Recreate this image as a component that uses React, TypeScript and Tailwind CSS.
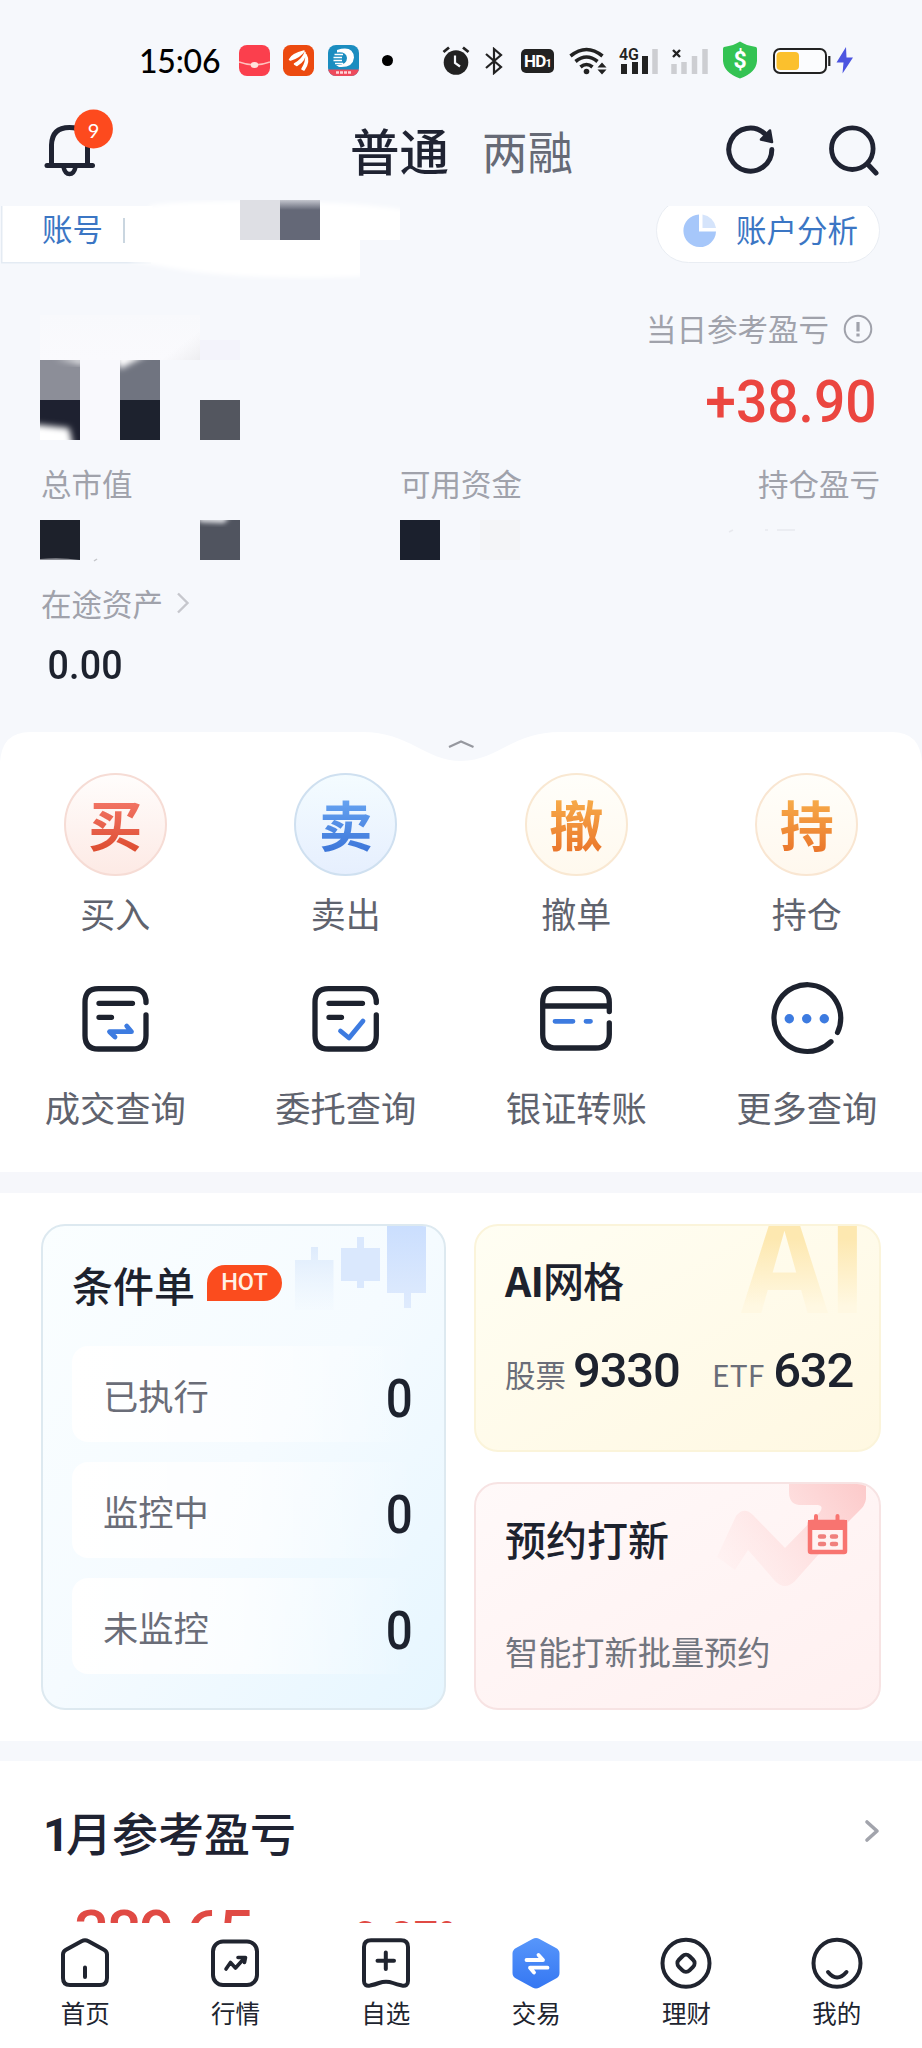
import React from "react";

const CJK = "font-['Noto_Sans_CJK_SC',sans-serif]";
const NUM = "font-[Roboto,'Noto_Sans_CJK_SC',sans-serif]";

function StatusBar() {
  return (
    <div className="flex h-[121px] w-full items-center pl-[139px]">
      <span className="w-[100px] font-[Lato,sans-serif] text-[32px] font-medium leading-[32px] tracking-[-0.2px] text-black">15:06</span>
      <svg width="31" height="31" viewBox="0 0 31 31">
        <rect width="31" height="31" rx="8" fill="#fb3f4d" />
        <path d="M0 17 Q15.500 23 31 17" fill="none" stroke="#ffc1bd" strokeWidth="1.500" />
        <ellipse cx="15.500" cy="20" rx="3.800" ry="3" fill="#ffe3dc" />
      </svg>
      <svg className="ml-[13px]" width="31" height="31" viewBox="0 0 31 31">
        <rect width="31" height="31" rx="7.500" fill="#ec4a10" />
        <path d="M6.500 14.500 Q9 9 21 6 Q17 12 7.500 15Z M11.500 19 Q20 14 22 7.500 Q23 14.500 14 20.500Z M19 24 Q23.500 17 23 9.500 Q27 16.500 21 25Z" fill="#fff" stroke="#fff" strokeWidth="1.500" strokeLinejoin="round" />
      </svg>
      <svg className="ml-[14px]" width="31" height="31" viewBox="0 0 31 31">
        <defs><clipPath id="appc"><rect width="31" height="31" rx="8" /></clipPath></defs>
        <g clipPath="url(#appc)">
          <rect width="31" height="31" fill="#1b8dc0" />
          <rect y="24.500" width="31" height="7" fill="#ee4a5c" />
          <path d="M9 5 Q25 0 26 12.500 Q25 23 11 22 L8 20 Q19 20.500 19 13 Q18.500 6.500 9 7.500Z" fill="#fff" />
          <path d="M6.500 9.500H15M5.500 12.500H14M5.500 15.500H14M7 18.500H15" stroke="#fff" strokeWidth="1.300" />
          <path d="M8 27.500H23" stroke="#ffd5d8" strokeWidth="2.500" strokeDasharray="3 1" />
        </g>
      </svg>
      <svg className="ml-[23px]" width="11" height="11"><circle cx="5.500" cy="5.500" r="5.500" fill="#000" /></svg>
      <svg className="ml-[49px]" width="28" height="30" viewBox="0 0 28 30">
        <circle cx="14" cy="16.500" r="12.300" fill="#222" />
        <path d="M1.500 6 L7 1.500 M26.500 6 L21 1.500" stroke="#222" strokeWidth="2.800" />
        <path d="M13 9.500V17L18 20.500" stroke="#f6f8fc" strokeWidth="2.200" fill="none" />
      </svg>
      <svg className="ml-[15px]" width="18" height="28" viewBox="0 0 18 28">
        <path d="M1 7 L16 20 L9 26 V2 L16 8 L1 21" fill="none" stroke="#222" strokeWidth="2.200" />
      </svg>
      <div className={`ml-[18px] mt-px flex h-[24px] w-[33px] items-center justify-center rounded-[5px] bg-[#222] ${NUM} text-[17px] font-bold leading-none tracking-[-0.8px] text-white`}>
        HD<span className="mt-[4px] text-[11px]">1</span>
      </div>
      <svg className="ml-[15px]" width="39" height="28" viewBox="0 0 39 28">
        <g fill="none" stroke="#222" strokeWidth="3.600">
          <path d="M1.500 9 Q17.500 -4 33.500 9" />
          <path d="M6.500 14.500 Q17.500 5.500 28.500 14.500" />
          <path d="M11.500 20 Q17.500 15 23.500 20" />
        </g>
        <circle cx="17.500" cy="24.500" r="2.800" fill="#222" />
        <path d="M28.500 20.500 L33 15.500 L37.500 20.500Z M28.500 22.500 L33 27.500 L37.500 22.500Z" fill="#222" />
      </svg>
      <svg className="ml-[11px] overflow-visible" width="40" height="30" viewBox="0 -1 40 30">
        <text x="0" y="12.500" fontFamily="Roboto" fontWeight="600" fontSize="17" textLength="20" lengthAdjust="spacingAndGlyphs" fill="#222">4G</text>
        <path d="M5 17V27M16 15V27M26 9V27" stroke="#222" strokeWidth="6" />
        <path d="M36 2V27" stroke="#cdced2" strokeWidth="5.500" />
      </svg>
      <svg className="ml-[12px]" width="38" height="28" viewBox="0 0 38 28">
        <path d="M3 17V27M13 15V27M23.500 9V27M34 2V27" stroke="#cdced2" strokeWidth="5.500" />
        <path d="M2 3L9 10M9 3L2 10" stroke="#222" strokeWidth="2.400" />
      </svg>
      <svg className="ml-[14px] -mt-px" width="34" height="38" viewBox="0 0 34 38">
        <path d="M17 0.500 Q23 4.500 33 6 Q34 6.500 34 8 V20 Q33 32 17 37.500 Q1 32 0 20 V8 Q0 6.500 1 6 Q11 4.500 17 0.500Z" fill="#34c353" />
        <text x="17" y="26.500" textAnchor="middle" fontFamily="Roboto" fontWeight="700" fontSize="23" fill="#fff">$</text>
      </svg>
      <svg className="ml-[16px]" width="58" height="26" viewBox="0 0 58 26">
        <rect x="1" y="1" width="52" height="24" rx="6" fill="#fff" fillOpacity=".5" stroke="#222" strokeWidth="2" />
        <rect x="3.500" y="4" width="22.500" height="18" rx="4" fill="#fbc02d" />
        <path d="M56.300 8V18" stroke="#222" strokeWidth="2.200" />
      </svg>
      <svg className="ml-[5px]" width="18" height="27" viewBox="0 0 18 27"><path d="M10 0 L0.500 15.500 H7.500 L6.500 26.500 L17 10.500 H10.500Z" fill="#4c55e0" /></svg>
    </div>
  );
}

function Header() {
  return (
    <header className="flex h-[79px] w-full items-start">
      <div className="w-[350px] pl-[43px]">
        <svg className="-mt-[14px]" width="72" height="70" viewBox="0 0 72 70">
          <path d="M8.500 56V38 Q9 20.500 26.500 20.500 Q44 20.500 44.500 38V56" fill="none" stroke="#1f2332" strokeWidth="5" />
          <path d="M4 58.500H49.500" stroke="#1f2332" strokeWidth="5" strokeLinecap="round" />
          <path d="M20.500 60 Q22 67 26.500 67 Q31 67 32.500 60" fill="none" stroke="#1f2332" strokeWidth="4.500" />
          <circle cx="50.500" cy="22" r="19.400" fill="#fd4a1e" />
          <text x="50.500" y="30.500" textAnchor="middle" fontFamily="Lato" fontSize="20" fill="#fff">9</text>
        </svg>
      </div>
      <div className={`-mt-px flex ${CJK} leading-[60px]`}>
        <span className="w-[132px] text-[49.5px] font-medium text-[#1f2332]">普通</span>
        <span className="w-[150px] text-[45.5px] text-[#666a76]">两融</span>
      </div>
      <svg className="ml-[93px] mt-[3px]" width="52" height="52" viewBox="0 0 52 52">
        <path d="M46.800 25.500 A21.500 21.500 0 1 1 39.500 9.500" fill="none" stroke="#1f2332" strokeWidth="5" strokeLinecap="round" />
        <path d="M45 6.500 L47 18 L36 15.500Z" fill="#1f2332" stroke="#1f2332" strokeWidth="2.500" strokeLinejoin="round" />
      </svg>
      <svg className="ml-[50px] mt-[3px]" width="52" height="54" viewBox="0 0 52 54">
        <circle cx="25.300" cy="24.700" r="20.800" fill="none" stroke="#1f2332" strokeWidth="4.800" />
        <path d="M40.500 40 L49 49" stroke="#1f2332" strokeWidth="5" strokeLinecap="round" />
      </svg>
    </header>
  );
}

function AccountRow() {
  return (
    <div className="relative flex h-[90px] w-full justify-between pr-[42px]">
      <svg className="absolute left-0 top-0" width="420" height="90" viewBox="0 0 420 90">
        <defs>
          <filter id="soft"><feGaussianBlur stdDeviation="2.200" /></filter>
          <linearGradient id="fade" x1="0" y1="0" x2="0" y2="1">
            <stop offset="0" stopColor="#c4c6ce" /><stop offset=".25" stopColor="#646877" />
          </linearGradient>
          <clipPath id="blob"><path d="M100 0H400V40H360V80H100Z" /></clipPath>
        </defs>
        <rect x="1" y="6" width="150" height="57.500" fill="#e4ebf3" />
        <rect x="2.500" y="6" width="150" height="56" fill="#fff" />
        <g clipPath="url(#blob)">
          <path d="M150 6 Q160 2 240 1 Q360 1 410 11 V46 H370 V76 Q240 82 160 66 Q150 64 130 61Z" fill="#fff" filter="url(#soft)" />
        </g>
        <rect x="240" y="0" width="40" height="40" fill="#dedfe4" />
        <rect x="280" y="0" width="40" height="40" fill="url(#fade)" />
        <path d="M124 18V43" stroke="#b9c8d6" strokeWidth="1.500" />
      </svg>
      <span className={`relative ml-[42px] mt-[9px] ${CJK} text-[30.5px] leading-[38px] text-[#3b76c4]`}>账号</span>
      <div className="relative mt-[6px] h-[58px] overflow-hidden">
        <div className="-mt-[8px] flex h-[65px] w-[224px] items-center rounded-full border border-[#e9edf3] bg-white pl-[26px]">
          <svg width="35" height="35" viewBox="0 0 35 35">
            <path d="M16 1.500 A16.300 16.300 0 1 0 33 18.500 H16Z" fill="#a6c7fa" />
            <path d="M19.500 1.500 A16 16 0 0 1 33 15 H19.500Z" fill="#d5e4fb" />
          </svg>
          <span className={`-mt-[4px] ml-[18px] ${CJK} text-[30.5px] leading-[38px] text-[#3b76c4]`}>账户分析</span>
        </div>
      </div>
    </div>
  );
}

const LABEL = "font-['Noto_Sans_CJK_SC',sans-serif] text-[30.5px] leading-[40px] text-[#a0a2ab]";

function Assets() {
  return (
    <section className="h-[442px] w-full pl-[40px] pr-[42px]">
      <div className="flex h-[170px] justify-between">
        <svg className="mt-[10px]" width="200" height="140" viewBox="0 300 200 140">
          <defs>
            <filter id="soft2" x="-50%" y="-50%" width="200%" height="200%"><feGaussianBlur stdDeviation="3" /></filter>
            <linearGradient id="haze" x1="0" y1="0" x2="0" y2="1"><stop offset="0" stopColor="#f8f9fc" /><stop offset="1" stopColor="#fafafd" /></linearGradient>
            <linearGradient id="haze2" x1="0" y1="0" x2="1" y2="1"><stop offset=".5" stopColor="#f0f0f3" stopOpacity="0" /><stop offset="1" stopColor="#ededf0" /></linearGradient>
            <clipPath id="cl1"><rect y="360" width="40" height="80" /></clipPath>
            <clipPath id="cl2"><rect x="80" y="360" width="40" height="40" /></clipPath>
          </defs>
          <rect y="315" width="160" height="45" fill="url(#haze)" />
          <rect x="120" y="330" width="40" height="30" fill="url(#haze2)" />
          <rect x="160" y="340" width="40" height="20" fill="#f3f3fb" />
          <rect x="40" y="360" width="40" height="80" fill="#f9f9fd" />
          <rect y="360" width="40" height="40" fill="#8c8e98" />
          <rect y="400" width="40" height="40" fill="#1e2130" />
          <g clipPath="url(#cl1)">
            <path d="M-10 424 L29 428 L34 450 H-10Z" fill="#fff" filter="url(#soft2)" />
            <path d="M15 358H44V364Z" fill="#fff" filter="url(#soft2)" />
          </g>
          <rect x="80" y="360" width="40" height="40" fill="#707480" />
          <g clipPath="url(#cl2)"><path d="M74 354H108L80 369Z" fill="#fff" filter="url(#soft2)" /></g>
          <rect x="80" y="400" width="40" height="40" fill="#1d222e" />
          <rect x="160" y="400" width="40" height="40" fill="#53565f" />
        </svg>
        <div className="flex flex-col items-end pt-[18px]">
          <div className="flex items-center pr-[7px]">
            <span className={LABEL}>当日参考盈亏</span>
            <svg className="ml-[14px] mt-[2px]" width="30" height="30" viewBox="0 0 30 30">
              <circle cx="15" cy="15" r="13.300" fill="none" stroke="#a0a2ab" strokeWidth="2" />
              <path d="M15 8V17.500M15 19.500V22.500" stroke="#a0a2ab" strokeWidth="3.200" />
            </svg>
          </div>
          <div className={`mt-[22px] origin-right scale-x-[0.92] pr-[4px] ${NUM} text-[60px] font-medium leading-[64px] tracking-[0px] text-[#eb4640]`}>+38.90</div>
        </div>
      </div>
      <div className="flex h-[60px] pt-[3px]">
        <span className={`${LABEL} w-[360px] pl-px`}>总市值</span>
        <span className={`${LABEL} flex-1`}>可用资金</span>
        <span className={LABEL}>持仓盈亏</span>
      </div>
      <svg width="800" height="42" viewBox="0 0 800 42">
        <defs>
          <filter id="soft3" x="-50%" y="-50%" width="200%" height="200%"><feGaussianBlur stdDeviation="2.500" /></filter>
          <clipPath id="cl3"><rect x="160" width="40" height="40" /></clipPath>
        </defs>
        <rect width="40" height="40" fill="#1d212b" />
        <path d="M0 39 Q20 37 40 40H0Z" fill="#8b8d94" />
        <rect x="160" width="40" height="40" fill="#50545f" />
        <g clipPath="url(#cl3)"><path d="M156 -4H190L184 3L160 2Z" fill="#e8e9ed" filter="url(#soft3)" /></g>
        <path d="M54 41L57 39" stroke="#c5c6ca" strokeWidth="1.500" />
        <rect x="360" width="40" height="40" fill="#1b202d" />
        <rect x="440" width="40" height="40" fill="#f4f5f8" />
        <path d="M689 12L693 10M725 10H728M737 10H755" stroke="#e8e9ee" strokeWidth="1.500" />
      </svg>
      <div className="flex h-[61px] items-center pt-[20px]">
        <span className={`${LABEL} pl-px`}>在途资产</span>
        <svg className="ml-[13px] mt-px" width="14" height="22" viewBox="0 0 14 22"><path d="M2 1.500L11.500 11L2 20.500" fill="none" stroke="#c6c7cd" strokeWidth="2.400" /></svg>
      </div>
      <div className={`mt-[17px] origin-left scale-x-[0.94] pl-[8px] ${NUM} text-[40px] font-medium leading-[52px] tracking-[0.2px] text-[#1d222e]`}>0.00</div>
    </section>
  );
}

const primary = [
  { c: "买", label: "买入", ring: "border-[#f6dcd5] from-[#fffdfc] to-[#fdeae5]", text: "from-[#f5796b] to-[#dc4a2c]" },
  { c: "卖", label: "卖出", ring: "border-[#cfe0f0] from-[#f4fcff] to-[#e6effe]", text: "from-[#6ca8f3] to-[#3b74d8]" },
  { c: "撤", label: "撤单", ring: "border-[#f9e8d2] from-[#fffefa] to-[#fff9ee]", text: "from-[#f8b04c] to-[#e9742a]" },
  { c: "持", label: "持仓", ring: "border-[#f9e6d2] from-[#fffefa] to-[#fff8ee]", text: "from-[#f8b04c] to-[#e9742a]" },
];

const D = "#1d222e";
const B = "#3d7be0";

const queries = [
  {
    label: "成交查询",
    icon: (
      <g fill="none" strokeWidth="5.300" strokeLinecap="round" strokeLinejoin="round">
        <path d="M67 17V19.500Q67 5.700 53.500 5.700H19.500Q6 5.700 6 19.500V52.500Q6 66 19.500 66H53.500Q67 66 67 52.500V32M20 20.300H53.500M20 34.300H32.500" stroke={D} />
        <path d="M36 54L30.500 48.700H52.500L47.700 43" stroke={B} strokeWidth="4.800" />
      </g>
    ),
  },
  {
    label: "委托查询",
    icon: (
      <g fill="none" strokeWidth="5.300" strokeLinecap="round" strokeLinejoin="round">
        <path d="M66.300 17V19.500Q66.300 5.700 52.500 5.700H18.500Q5 5.700 5 19.500V52.500Q5 66 18.500 66H52.500Q66.300 66 66.300 52.500V32M19 20.300H52.500M19 34.300H31.500" stroke={D} />
        <path d="M30.500 48L39 55L53 38" stroke={B} strokeWidth="4.800" />
      </g>
    ),
  },
  {
    label: "银证转账",
    icon: (
      <g fill="none" strokeWidth="5.300" strokeLinecap="round" strokeLinejoin="round">
        <path d="M69.300 28.500V19.500Q69.300 5.700 55.500 5.700H16.500Q2.700 5.700 2.700 19.500V51.500Q2.700 65 16.500 65H55.500Q69.300 65 69.300 51.500V40M3 23H69" stroke={D} />
        <path d="M15 38.300H33M46 38.300H50.500" stroke={B} strokeWidth="4.800" />
      </g>
    ),
  },
  {
    label: "更多查询",
    icon: (
      <g>
        <path d="M66.500 49.500A33.400 33.400 0 1 0 60 58.700" fill="none" stroke={D} strokeWidth="5.200" strokeLinecap="round" />
        <g fill={B}><circle cx="18.300" cy="35.700" r="4.700" /><circle cx="35.700" cy="35.700" r="4.700" /><circle cx="53.300" cy="35.700" r="4.700" /></g>
      </g>
    ),
  },
];

function Actions() {
  return (
    <section className="relative h-[440px] w-full bg-[#f6f8fc]">
      <svg className="absolute inset-0" width="922" height="440" viewBox="0 0 922 440">
        <path d="M0 30Q2 0 30 0H362C410 0 425 29 461 29S512 0 560 0H892Q920 0 922 30V440H0Z" fill="#fff" />
        <path d="M449 15L461 9.500L473.500 15" fill="none" stroke="#96989f" strokeWidth="2.200" />
      </svg>
      <div className="relative grid h-[440px] grid-cols-4 content-start pt-[41px]">
        {primary.map((p) => (
          <div key={p.c} className="flex h-[202px] flex-col items-center">
            <div className={`flex h-[103px] w-[103px] items-center justify-center rounded-full border-2 bg-gradient-to-b ${p.ring}`}>
              <span className={`-mt-[2px] bg-gradient-to-b ${p.text} bg-clip-text ${CJK} text-[54px] font-bold leading-[60px] text-transparent`}>{p.c}</span>
            </div>
            <span className={`mt-[15px] ${CJK} text-[35px] leading-[44px] text-[#5f636e]`}>{p.label}</span>
          </div>
        ))}
        {queries.map((q) => (
          <div key={q.label} className="flex flex-col items-center pt-[8px]">
            <svg className="overflow-visible" width="72" height="72" viewBox="0 0 72 72">{q.icon}</svg>
            <span className={`mt-[30px] ${CJK} text-[35.3px] leading-[44px] text-[#5f636e]`}>{q.label}</span>
          </div>
        ))}
      </div>
    </section>
  );
}

function Cards() {
  return (
    <section className="flex h-[548px] w-full justify-between bg-white pl-[41px] pr-[41px] pt-[31px]">
      <div className="relative flex h-[486px] w-[405px] flex-col overflow-hidden rounded-[24px] border-2 border-[#dde9f0] bg-gradient-to-br from-[#fafeff] via-[#f5fbff] to-[#e6f6ff] px-[29px]">
        <svg className="absolute -top-[2px] right-0" width="160" height="96" viewBox="0 0 160 96">
          <defs>
            <linearGradient id="k1" x1="0" y1="0" x2="0" y2="1"><stop offset="0" stopColor="#deebfc" /><stop offset="1" stopColor="#e6f1fd" stopOpacity=".1" /></linearGradient>
            <linearGradient id="k3" x1="0" y1="0" x2="0" y2="1"><stop offset="0" stopColor="#cadefe" /><stop offset="1" stopColor="#dfebfd" /></linearGradient>
          </defs>
          <path d="M27 23H34V36H49.500V86H11V36H27Z" fill="url(#k1)" />
          <path d="M73 13H80V24H96V57H80V64H73V57H57V24H73Z" fill="#dae8fd" />
          <path d="M103 0H142V69H127V84H120V69H103Z" fill="url(#k3)" />
        </svg>
        <div className="relative flex h-[120px] pt-[28px]">
          <span className={`${CJK} text-[41px] font-medium leading-[60px] text-[#1d222e]`}>条件单</span>
          <span className={`ml-[12px] mt-[11px] flex h-[36px] w-[75px] items-center justify-center rounded-[18px] rounded-bl-none bg-[#fb4c1e] ${NUM} text-[23.5px] font-medium leading-none text-[#fff1e6]`}>HOT</span>
        </div>
        <div className="relative flex flex-col gap-[20px]">
          {["已执行", "监控中", "未监控"].map((t) => (
            <div key={t} className="flex h-[96px] items-center justify-between rounded-[16px] bg-gradient-to-r from-white via-white/70 to-transparent pl-[31px] pr-[2px]">
              <span className={`mt-px ${CJK} text-[35.3px] leading-[44px] text-[#6a6d78]`}>{t}</span>
              <span className={`mt-[9px] inline-block origin-right scale-x-[0.88] ${NUM} text-[54px] font-medium leading-[60px] text-[#1d222e]`}>0</span>
            </div>
          ))}
        </div>
      </div>
      <div className="flex w-[407px] flex-col gap-[30px]">
        <div className="relative h-[228px] overflow-hidden rounded-[24px] border-2 border-[#fbf4da] bg-gradient-to-br from-[#fffef3] to-[#fff8e2] pl-[29px]">
          <span className={`absolute right-[12px] top-[-41px] origin-right scale-x-[0.86] bg-gradient-to-b from-[#fde8b0] from-35% to-[#fff8e2] to-80% bg-clip-text ${NUM} text-[152px] font-bold leading-[152px] text-transparent`}>AI</span>
          <div className={`relative mt-[23px] ${CJK} text-[41px] font-medium leading-[60px] tracking-[-0.9px] text-[#1d222e]`}><span className="font-bold">AI</span>网格</div>
          <div className="relative mt-[32px] flex items-baseline leading-[60px]">
            <span className={`${CJK} text-[30.5px] text-[#6a6d78]`}>股票</span>
            <span className={`ml-[7px] w-[139px] ${NUM} text-[49px] font-medium tracking-[-1.2px] text-[#1d222e]`}>9330</span>
            <span className={`${CJK} text-[30px] text-[#6a6d78]`}>ETF</span>
            <span className={`ml-[9px] ${NUM} text-[49px] font-medium tracking-[-1.2px] text-[#1d222e]`}>632</span>
          </div>
        </div>
        <div className="relative h-[228px] overflow-hidden rounded-[24px] border-2 border-[#f7e3e3] bg-gradient-to-br from-[#fff9f9] to-[#fff0f0] pl-[29px]">
          <svg className="absolute -left-[2px] -top-[2px]" width="407" height="120" viewBox="0 0 407 120">
            <defs>
              <linearGradient id="ar" x1="250" y1="100" x2="390" y2="0" gradientUnits="userSpaceOnUse"><stop offset="0" stopColor="#ffe6e6" stopOpacity=".1" /><stop offset=".5" stopColor="#fee2e2" /><stop offset="1" stopColor="#fccaca" /></linearGradient>
            </defs>
            <path d="M243 75L262 34Q270 24 279 33L311 66L346 30Q350 24 344 23H325Q315 22 315 10V0H392V17Q391 24 385 29L368 46L321 99Q311 109 301 99L274 68L261 88Z" fill="url(#ar)" />
            <path d="M342 34V40M363.500 34V40" stroke="#f87470" strokeWidth="4" strokeLinecap="round" />
            <rect x="336" y="40" width="35" height="30" rx="1" fill="#fff3f2" stroke="#f87470" strokeWidth="4.500" />
            <path d="M334 38H373V48H334Z" fill="#f87470" />
            <path d="M346 54.500H350M358 54.500H362M346 62H350M358 62H362" stroke="#f0807c" strokeWidth="4.500" strokeLinecap="round" />
          </svg>
          <div className={`relative mt-[24px] ${CJK} text-[41px] font-medium leading-[60px] text-[#1d222e]`}>预约打新</div>
          <div className={`relative mt-[59px] ${CJK} text-[33.2px] leading-[48px] text-[#72757f]`}>智能打新批量预约</div>
        </div>
      </div>
    </section>
  );
}

const nav = [
  {
    label: "首页",
    icon: <path d="M4 17.500Q4 14.500 7 12.800L22.500 4.200Q26 2.500 29.500 4.200L45 12.800Q48 14.500 48 17.500V41Q48 48 41 48H11Q4 48 4 41ZM26 30.500V40" />,
  },
  {
    label: "行情",
    icon: <g><rect x="4" y="4.500" width="44" height="43.500" rx="10" /><path d="M17 32L21.500 25.500L26.500 31L35 21.500M29 20.500H36.500L35.500 25.500" strokeWidth="3.600" /></g>,
  },
  {
    label: "自选",
    icon: <g><path d="M4 10Q4 3.300 11 3.300H41Q48 3.300 48 10V44Q48 49.500 42 48.500Q37 47.500 33 46Q26 43.500 19 46Q15 47.500 10 48.500Q4 49.500 4 44Z" /><path d="M17.500 23.700H34M25.800 15.500V32" /></g>,
  },
  {
    label: "交易",
    icon: (
      <g stroke="none">
        <defs><linearGradient id="hx" x1="0" y1="0" x2="0" y2="1"><stop offset="0" stopColor="#5796fb" /><stop offset="1" stopColor="#3577f2" /></linearGradient></defs>
        <path d="M22.500 2Q26 0 29.500 2L46 11Q49.500 13 49.500 16.500V36Q49.500 39.500 46 41.500L29.500 50.500Q26 52.500 22.500 50.500L6 41.500Q2.500 39.500 2.500 36V16.500Q2.500 13 6 11Z" fill="url(#hx)" />
        <path d="M16.500 23H33L28.500 18M37.500 30.700H20L24 35.500" fill="none" stroke="#fff" strokeWidth="3.800" strokeLinecap="round" strokeLinejoin="round" />
      </g>
    ),
  },
  {
    label: "理财",
    icon: <g><circle cx="26" cy="26.300" r="23.500" /><rect x="18.500" y="18.800" width="15" height="15" rx="5" transform="rotate(45 26 26.300)" /></g>,
  },
  {
    label: "我的",
    icon: <g><circle cx="26" cy="26.300" r="23.500" /><path d="M17 35Q26 46 35.500 35" /></g>,
  },
];

export default function App() {
  return (
    <div className="flex h-[2048px] w-[922px] flex-col overflow-hidden bg-[#f6f8fc]">
      <StatusBar />
      <Header />
      <AccountRow />
      <Assets />
      <Actions />
      <div className="h-[21px] shrink-0 bg-[#f6f7fb]" />
      <Cards />
      <div className="h-[20px] shrink-0 bg-[#f6f8fc]" />
      <section className="h-[162px] shrink-0 overflow-hidden bg-white pl-[43px] pr-[42px]">
        <div className="flex h-[102px] items-center justify-between pt-[38px]">
          <span className={`flex items-baseline ${CJK} text-[46px] font-medium leading-[64px] text-[#1f2332]`}><span className={`w-[23px] ${NUM} font-bold leading-none`}>1</span>月参考盈亏</span>
          <svg width="16" height="24" viewBox="0 0 16 24"><path d="M3 3L13 12L3 21" fill="none" stroke="#a2a4ac" strokeWidth="3.600" strokeLinecap="round" strokeLinejoin="round" /></svg>
        </div>
        <div className={`mt-[34px] flex pl-[31px] ${NUM} font-medium text-[#e04a44]`}>
          <span className="w-[279px] text-[62px] leading-[72px] tracking-[-2.8px]">389.65</span>
          <span className="mt-[15px] text-[43px] leading-[48px]">0.87%</span>
        </div>
      </section>
      <nav className="grid h-[125px] shrink-0 grid-cols-6 bg-white px-[10px] pt-[14px]">
        {nav.map((n) => (
          <div key={n.label} className="flex flex-col items-center">
            <svg width="52" height="53" viewBox="0 0 52 53" fill="none" stroke="#20242f" strokeWidth="4" strokeLinecap="round" strokeLinejoin="round">{n.icon}</svg>
            <span className={`mt-[7px] ${CJK} text-[24.5px] leading-[32px] text-[#20242f]`}>{n.label}</span>
          </div>
        ))}
      </nav>
    </div>
  );
}
